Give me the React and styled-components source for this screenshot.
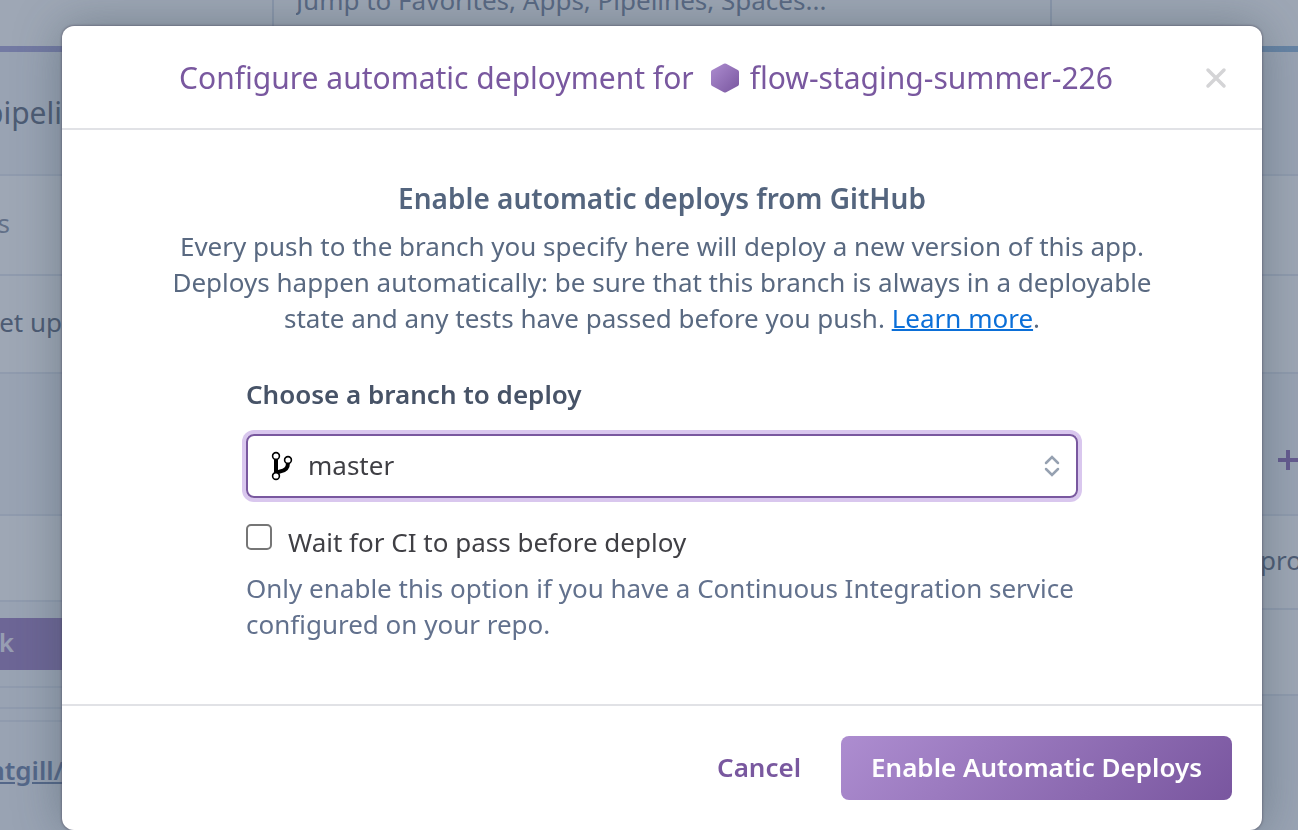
import React, { useState } from 'react'
import styled, { createGlobalStyle } from 'styled-components'

const GlobalStyle = createGlobalStyle`
  * {
    box-sizing: border-box;
  }

  body {
    background: #f4f6fa;
    color: #3f3f44;
    font-family: 'Noto Sans', sans-serif;
    font-size: 26px;
    line-height: 36px;
    margin: 0;
    overflow: hidden;
  }

  button,
  input,
  select {
    font: inherit;
    margin: 0;
  }
`

const Page = styled.div`
  height: 100vh;
  overflow: hidden;
`

const TopBar = styled.header`
  background: #fff;
  border-bottom: 6px solid;
  border-image: linear-gradient(to right, #a9a4da, #8fb8de) 1;
  display: flex;
  height: 52px;
  justify-content: center;
  padding: 0 24px 0 50px;
`

const JumpInput = styled.input`
  background: transparent;
  border: solid #d8dfeb;
  border-width: 0 2px;
  color: #76839b;
  height: 46px;
  outline: none;
  padding: 0 22px 60px;
  width: 780px;

  &::placeholder {
    color: #76839b;
    opacity: 1;
  }
`

const Columns = styled.div`
  display: flex;
  justify-content: space-between;
`

const Column = styled.div`
  flex: 1;
`

const Row = styled.div`
  align-items: center;
  background: ${({ $plain }) => ($plain ? '#fff' : 'transparent')};
  border-bottom: ${({ $last }) => ($last ? 'none' : '2px solid #e2e7f0')};
  color: ${({ $muted }) => ($muted ? '#8791a4' : '#5d687c')};
  display: flex;
  font-size: ${({ $large }) => ($large ? '30px' : '26px')};
  height: ${({ $height }) => $height}px;
`

// text that is cut off by the left edge of the window
const Clipped = styled.span`
  display: flex;
  flex: none;
  justify-content: flex-end;
  overflow: hidden;
  padding-bottom: ${({ $large }) => ($large ? 0 : 4)}px;
  white-space: nowrap;
  width: ${({ $width = 62 }) => $width}px;
`

const Trailing = styled(Clipped)`
  justify-content: flex-start;
  margin-left: auto;
  width: 38px;
`

const AddButton = styled.button`
  background: none;
  border: none;
  display: flex;
  margin: 32px 0 0 auto;
  padding: 0;
`

const LinkButton = styled.button`
  background: #9d7cc0;
  border: none;
  color: #f0eaf8;
  font-weight: 600;
  height: 52px;
  padding: 0;
  text-align: left;
  width: 180px;
`

const RepoLink = styled.a`
  color: #6b7fa6;
  font-weight: 600;
  text-decoration: underline;
`

const Overlay = styled.div`
  background: rgba(62, 80, 107, 0.5);
  inset: 0;
  overflow: hidden;
  padding: 26px 36px 0 62px;
  position: fixed;
`

const Modal = styled.div`
  background: #fff;
  border-radius: 12px;
  box-shadow: 0 0 2px 1px rgba(70, 66, 86, 0.4), 0 0 48px rgba(50, 70, 80, 0.4);
  margin: 0 auto;
  max-width: 1200px;
`

const ModalHeader = styled.div`
  align-items: center;
  border-bottom: 2px solid #e1e2e6;
  display: flex;
  height: 104px;
  padding: 2px 34px 0 26px;
`

const Title = styled.h2`
  align-items: center;
  color: #79589f;
  display: flex;
  flex: 1;
  font-size: 30px;
  font-weight: 400;
  gap: 10px;
  justify-content: center;
  line-height: 40px;
  margin: 0;
  white-space: nowrap;

  svg {
    flex: none;
    margin-left: 6px;
  }
`

const CloseButton = styled.button`
  background: none;
  border: none;
  cursor: pointer;
  display: flex;
  padding: 0;
`

const ModalBody = styled.div`
  padding: 50px 100px 62px;
`

const Intro = styled.div`
  color: #596981;
  text-align: center;
`

const Heading = styled.h3`
  color: #54657e;
  font-size: 28px;
  font-weight: 600;
  margin: 0 0 12px;
`

const Paragraph = styled.p`
  margin: 0;
`

const Line = styled.span`
  display: block;
  white-space: nowrap;
`

const LearnMore = styled.a`
  color: #0b6fd8;
  text-decoration: underline;
  text-decoration-thickness: 2px;
`

const Form = styled.form`
  margin: 40px auto 0;
  max-width: 832px;
`

const FieldLabel = styled.label`
  color: #475367;
  display: block;
  font-weight: 600;
  margin-bottom: 22px;
`

const SelectBox = styled.div`
  align-items: center;
  border: 2px solid #79589f;
  border-radius: 8px;
  box-shadow: 0 0 0 4px #d9c7ee;
  display: flex;
  height: 64px;
  padding: 0 16px 0 22px;
`

const BranchSelect = styled.select`
  appearance: none;
  background: none;
  border: none;
  color: #3f3f44;
  flex: 1;
  height: 100%;
  outline: none;
  padding: 0 0 2px 14px;
`

const CheckRow = styled.div`
  align-items: flex-start;
  display: flex;
  gap: 16px;
  margin-top: 26px;
`

const Checkbox = styled.input`
  appearance: none;
  background: ${({ checked }) => (checked ? '#79589f' : '#fff')};
  border: 2px solid #767676;
  border-radius: 5px;
  flex: none;
  height: 26px;
  width: 26px;
`

const CheckLabel = styled.label`
  color: #3f3f44;
`

const Hint = styled.p`
  color: #62718d;
  margin: 10px 0 0;
`

const ModalFooter = styled.div`
  align-items: center;
  border-top: 2px solid #e1e2e6;
  display: flex;
  gap: 10px;
  justify-content: flex-end;
  padding: 30px;
`

const Button = styled.button`
  background: ${({ $primary }) =>
    $primary ? 'linear-gradient(135deg, #ad8dd0, #79569f)' : 'none'};
  border: none;
  border-radius: 8px;
  color: ${({ $primary }) => ($primary ? '#fff' : '#79589f')};
  cursor: pointer;
  font-weight: 600;
  height: 64px;
  padding: 0 30px 2px;
  white-space: nowrap;
`

const AppHexagon = () => (
  <svg width="30" height="30" viewBox="0 0 30 30" aria-hidden="true">
    <defs>
      <linearGradient id="hex" x1="0" y1="0" x2="1" y2="1">
        <stop offset="0" stopColor="#ad8dd0" />
        <stop offset="1" stopColor="#79569f" />
      </linearGradient>
    </defs>
    <path
      d="M13.800 .8a2.400 2.400 0 0 1 2.400 0L27.800 7a2.200 2.200 0 0 1 1.200 2v12a2.200 2.200 0 0 1-1.200 2l-11.600 6.200a2.400 2.400 0 0 1-2.400 0L2.200 23A2.200 2.200 0 0 1 1 21V9a2.200 2.200 0 0 1 1.200-2z"
      fill="url(#hex)"
    />
  </svg>
)

const CloseIcon = () => (
  <svg width="24" height="24" viewBox="0 0 24 24" aria-hidden="true">
    <path
      d="M4 4l16 16M20 4L4 20"
      stroke="#d4d4d6"
      strokeWidth="3.500"
      strokeLinecap="round"
    />
  </svg>
)

const BranchIcon = () => (
  <svg width="24" height="30" viewBox="0 0 24 30" fill="none" stroke="#000" aria-hidden="true">
    <path d="M6 8v14" strokeWidth="4" />
    <path d="M18 12c0 6-4 8-8 8.500-2 .3-3 .7-4 2" strokeWidth="4" />
    <circle cx="6" cy="5" r="3.400" fill="#fff" strokeWidth="1.600" />
    <circle cx="18" cy="9" r="3.400" fill="#fff" strokeWidth="1.600" />
    <circle cx="6" cy="25" r="3.400" fill="#fff" strokeWidth="1.600" />
  </svg>
)

const SortIcon = () => (
  <svg width="16" height="22" viewBox="0 0 16 22" fill="none" aria-hidden="true">
    <path
      d="M2 8l6-6 6 6M2 14l6 6 6-6"
      stroke="#96a1b1"
      strokeWidth="2.500"
      strokeLinecap="round"
    />
  </svg>
)

const PlusIcon = () => (
  <svg width="20" height="20" viewBox="0 0 20 20" aria-hidden="true">
    <path d="M10 0v20M0 10h20" stroke="#8d68b4" strokeWidth="4" />
  </svg>
)

const Background = () => (
  <Page>
    <TopBar>
      <JumpInput
        aria-label="Jump to"
        placeholder="Jump to Favorites, Apps, Pipelines, Spaces..."
      />
    </TopBar>
    <Columns>
      <Column>
        <Row $height={124} $large><Clipped $large>pipeli</Clipped></Row>
        <Row $height={100} $plain $muted><Clipped $width={10}>s</Clipped></Row>
        <Row $height={98} $plain><Clipped>et up</Clipped></Row>
        <Row $height={142} />
        <Row $height={86} $plain />
        <Row $height={86}><LinkButton><Clipped $width={14}>k</Clipped></LinkButton></Row>
        <Row $height={21} />
        <Row $height={13} />
        <Row $height={100} $last>
          <Clipped $width={64}><RepoLink href="#repo">ntgill/</RepoLink></Clipped>
        </Row>
      </Column>
      <Column>
        <Row $height={124} />
        <Row $height={100} $plain />
        <Row $height={98} $plain />
        <Row $height={142}><AddButton aria-label="Add"><PlusIcon /></AddButton></Row>
        <Row $height={94} $plain><Trailing>pro</Trailing></Row>
        <Row $height={86} $plain />
      </Column>
    </Columns>
  </Page>
)

export default function App() {
  const [branch, setBranch] = useState('master')
  const [waitForCi, setWaitForCi] = useState(false)

  return (
    <>
      <GlobalStyle />
      <Background />
      <Overlay>
        <Modal role="dialog" aria-labelledby="modal-title">
          <ModalHeader>
            <Title id="modal-title">
              Configure automatic deployment for
              <AppHexagon />
              <span>flow-staging-summer-226</span>
            </Title>
            <CloseButton aria-label="Close">
              <CloseIcon />
            </CloseButton>
          </ModalHeader>
          <ModalBody>
            <Intro>
              <Heading>Enable automatic deploys from GitHub</Heading>
              <Paragraph>
                <Line>Every push to the branch you specify here will deploy a new version of this app.</Line>
                <Line>Deploys happen automatically: be sure that this branch is always in a deployable</Line>
                <Line>
                  state and any tests have passed before you push.{' '}
                  <LearnMore href="#learn-more">Learn more</LearnMore>.
                </Line>
              </Paragraph>
            </Intro>
            <Form id="deploy-form" onSubmit={(e) => e.preventDefault()}>
              <FieldLabel htmlFor="branch">Choose a branch to deploy</FieldLabel>
              <SelectBox>
                <BranchIcon />
                <BranchSelect
                  id="branch"
                  value={branch}
                  onChange={(e) => setBranch(e.target.value)}
                >
                  <option value="master">master</option>
                </BranchSelect>
                <SortIcon />
              </SelectBox>
              <CheckRow>
                <Checkbox
                  id="wait-ci"
                  type="checkbox"
                  checked={waitForCi}
                  onChange={(e) => setWaitForCi(e.target.checked)}
                />
                <CheckLabel htmlFor="wait-ci">Wait for CI to pass before deploy</CheckLabel>
              </CheckRow>
              <Hint>
                Only enable this option if you have a Continuous Integration service
                configured on your repo.
              </Hint>
            </Form>
          </ModalBody>
          <ModalFooter>
            <Button type="button">Cancel</Button>
            <Button type="submit" form="deploy-form" $primary>
              Enable Automatic Deploys
            </Button>
          </ModalFooter>
        </Modal>
      </Overlay>
    </>
  )
}
